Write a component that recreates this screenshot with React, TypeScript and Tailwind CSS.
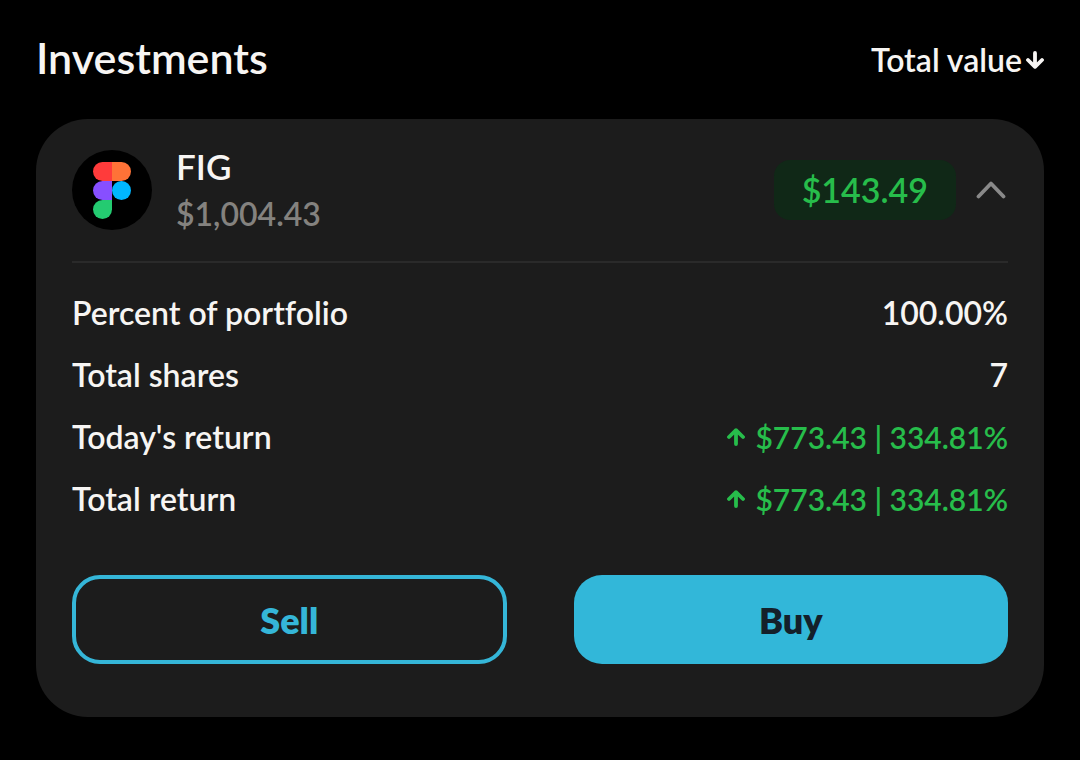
import { useState } from "react";

const holding = {
  symbol: "FIG",
  value: "$1,004.43",
  price: "$143.49",
};

const stats = [
  { label: "Percent of portfolio", value: "100.00%", gain: false },
  { label: "Total shares", value: "7", gain: false },
  { label: "Today's return", value: "$773.43 | 334.81%", gain: true },
  { label: "Total return", value: "$773.43 | 334.81%", gain: true },
];

function FigmaLogo() {
  return (
    <svg width="38" height="57" viewBox="0 0 38 57" aria-hidden="true">
      <path d="M9.5 0H19v19H9.5a9.5 9.5 0 0 1 0-19Z" fill="#ff3b3b" />
      <path d="M19 0h9.5a9.5 9.5 0 0 1 0 19H19Z" fill="#ff7237" />
      <path d="M9.5 19H19v19H9.5a9.5 9.5 0 0 1 0-19Z" fill="#874fff" />
      <circle cx="28.5" cy="28.5" r="9.5" fill="#00b6ff" />
      <path d="M9.5 38H19v9.5A9.5 9.5 0 1 1 9.5 38Z" fill="#24cb71" />
    </svg>
  );
}

function ArrowIcon({ className }: { className?: string }) {
  return (
    <svg
      width="18"
      height="18"
      viewBox="0 0 18 18"
      fill="none"
      stroke="currentColor"
      strokeWidth="3.8"
      strokeLinecap="round"
      strokeLinejoin="round"
      aria-hidden="true"
      className={className}
    >
      <path d="M9 16V2.2M2 9l7-6.8L16 9" />
    </svg>
  );
}

export default function App() {
  const [open, setOpen] = useState(true);

  return (
    <main className="min-h-screen bg-black px-9 pt-8 pb-11 font-['Lato',sans-serif] font-semibold text-[#f7f5f3]">
      <header className="flex items-center justify-between pb-9">
        <h1 className="text-[43px] leading-[51px]">Investments</h1>
        <button type="button" className="flex items-center gap-1 pt-1 text-[32px] leading-10">
          Total value
          <ArrowIcon className="rotate-180" />
        </button>
      </header>

      <section className="rounded-[52px] bg-[#1c1c1c] px-9 pt-[23px] pb-[53px]">
        <div className="flex items-center justify-between border-b-2 border-[#2a2a2a] pb-[23px]">
          <div className="flex items-center gap-6">
            <div className="flex size-20 items-center justify-center rounded-full bg-black">
              <FigmaLogo />
            </div>
            <div>
              <h2 className="text-[35px] leading-12">{holding.symbol}</h2>
              <p className="text-[32px] leading-12 text-[#84827f]">{holding.value}</p>
            </div>
          </div>
          <div className="flex items-center gap-5">
            <span className="rounded-2xl bg-[#102817] px-7 py-2 text-[34px] leading-11 text-[#27bd4b]">
              {holding.price}
            </span>
            <button
              type="button"
              aria-label="Toggle details"
              aria-expanded={open}
              onClick={() => setOpen(!open)}
              className="pr-0.5 text-[#898989]"
            >
              <svg
                width="30"
                height="18"
                viewBox="0 0 30 18"
                fill="none"
                stroke="currentColor"
                strokeWidth="3.8"
                strokeLinecap="round"
                strokeLinejoin="round"
                className={open ? "" : "rotate-180"}
              >
                <path d="M2.5 15.5 15 2.5l12.5 13" />
              </svg>
            </button>
          </div>
        </div>

        {open && (
          <>
            <dl className="flex flex-col gap-[22px] pt-[30px] pb-14 leading-10">
              {stats.map((stat) => (
                <div key={stat.label} className="flex justify-between">
                  <dt className="text-[32px] leading-10 [font-variant-ligatures:none]">{stat.label}</dt>
                  {stat.gain ? (
                    <dd className="flex items-center gap-2.5 text-[30px] leading-10 text-[#27bd4b]">
                      <ArrowIcon />
                      {stat.value}
                    </dd>
                  ) : (
                    <dd className="text-[32px] leading-10">{stat.value}</dd>
                  )}
                </div>
              ))}
            </dl>

            <div className="grid grid-cols-2 gap-[67px] text-[36px] leading-11 font-extrabold">
              <button
                type="button"
                className="h-[89px] rounded-[28px] border-4 border-[#35b6d8] text-[#35b6d8]"
              >
                Sell
              </button>
              <button type="button" className="h-[89px] rounded-[28px] bg-[#32b7d9] text-[#14202a]">
                Buy
              </button>
            </div>
          </>
        )}
      </section>
    </main>
  );
}
